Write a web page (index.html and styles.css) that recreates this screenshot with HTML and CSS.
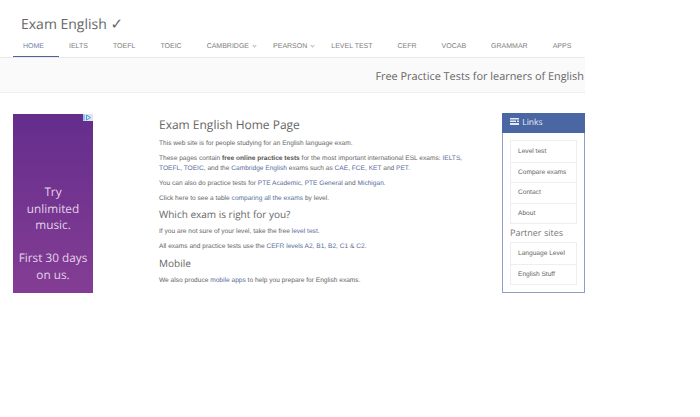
FILE: index.html
```html
<!DOCTYPE html>
<html lang="en">
<head>
    <meta charset="UTF-8">
    <meta name="viewport" content="width=device-width, initial-scale=1.0">
    <title>Exam English</title>
    <link rel="stylesheet" href="styles.css">
</head>
<body>

<div class="page">
    <header class="site-header">
        <div class="logo">Exam English <span class="tick">✓</span></div>
        <nav class="main-nav">
            <a href="#" class="active">HOME</a>
            <a href="#">IELTS</a>
            <a href="#">TOEFL</a>
            <a href="#">TOEIC</a>
            <a href="#">CAMBRIDGE<span class="caret"></span></a>
            <a href="#">PEARSON<span class="caret"></span></a>
            <a href="#">LEVEL TEST</a>
            <a href="#">CEFR</a>
            <a href="#">VOCAB</a>
            <a href="#">GRAMMAR</a>
            <a href="#">APPS</a>
        </nav>
    </header>

    <div class="hero">Free Practice Tests for learners of English</div>

    <div class="main">
        <!-- advert -->
        <aside class="ad">
            <span class="ad-badge">
                <svg width="9" height="7" viewBox="0 0 9 7"><path d="M1 0.5V6.5M3.5 1L7.5 3.5L3.5 6Z" fill="none" stroke="#35a7d8" stroke-width="1"/></svg>
            </span>
            <p>Try<br>unlimited<br>music.</p>
            <p>First 30 days<br>on us.</p>
        </aside>

        <section class="content">
            <h1>Exam English Home Page</h1>
            <p>This web site is for people studying for an English language exam.</p>
            <p>These pages contain <b>free online practice tests</b> for the most important international ESL exams: <a href="#">IELTS</a>, <a href="#">TOEFL</a>, <a href="#">TOEIC</a>, and the <a href="#">Cambridge English</a> exams such as <a href="#">CAE</a>, <a href="#">FCE</a>, <a href="#">KET</a> and <a href="#">PET</a>.</p>
            <p>You can also do practice tests for <a href="#">PTE Academic</a>, <a href="#">PTE General</a> and <a href="#">Michigan</a>.</p>
            <p>Click here to see a table <a href="#">comparing all the exams</a> by level.</p>
            <h2>Which exam is right for you?</h2>
            <p>If you are not sure of your level, take the free <a href="#">level test</a>.</p>
            <p>All exams and practice tests use the <a href="#">CEFR levels</a> <a href="#">A2</a>, <a href="#">B1</a>, <a href="#">B2</a>, <a href="#">C1</a> &amp; <a href="#">C2</a>.</p>
            <h2>Mobile</h2>
            <p>We also produce <a href="#">mobile apps</a> to help you prepare for English exams.</p>
        </section>

        <aside class="sidebar">
            <div class="sidebar-title">
                <svg width="9" height="7" viewBox="0 0 9 7"><path d="M0 0H9V1.5H0ZM0 2.5H6V4H0ZM7 2.5H9V4H7ZM0 5H9V7H0Z" fill="#e6eaf4"/></svg>
                Links
            </div>
            <div class="sidebar-body">
                <ul class="link-list">
                    <li>Level test</li>
                    <li>Compare exams</li>
                    <li>Contact</li>
                    <li>About</li>
                </ul>
                <h3>Partner sites</h3>
                <ul class="link-list">
                    <li>Language Level</li>
                    <li>English Stuff</li>
                </ul>
            </div>
        </aside>
    </div>
</div>

</body>
</html>
```

FILE: styles.css
```css
body {
    margin: 0;
    background-color: #fff;
    color: #666;
    font-family: "Liberation Sans", Arial, sans-serif;
    font-size: 6.6px;
    text-rendering: geometricPrecision;
}

a {
    color: #5a6d9e;
    text-decoration: none;
}

.page {
    width: 585px;
}

/* header */
.site-header {
    height: 58px;
    box-sizing: border-box;
    border-bottom: 1px solid #e9e9e9;
}

.logo {
    height: 37px;
    padding: 14px 0 0 21px;
    box-sizing: border-box;
    font-family: "Open Sans", sans-serif;
    font-size: 14px;
    line-height: 21px;
    color: #666;
}

.tick {
    font-family: "DejaVu Sans", sans-serif;
    font-size: 15px;
}

.main-nav {
    display: flex;
    padding-left: 13px;
}

.main-nav a {
    display: block;
    height: 20px;
    padding: 0 15px 0 10px;
    box-sizing: border-box;
    font-size: 7px;
    line-height: 20px;
    color: #808080;
    white-space: nowrap;
}

.main-nav a.active {
    color: #7682aa;
    border-bottom: 1px solid #4a64a0;
}

.caret {
    display: inline-block;
    width: 2px;
    height: 2px;
    margin: 0 -8px 1px 4px;
    border-right: 1px solid #bbb;
    border-bottom: 1px solid #bbb;
    transform: rotate(45deg);
}

/* strapline */
.hero {
    height: 35px;
    box-sizing: border-box;
    background-color: #fafafa;
    border-bottom: 1px solid #eee;
    padding-right: 1px;
    text-align: right;
    font-family: "Open Sans", sans-serif;
    font-size: 10.9px;
    line-height: 37px;
    color: #666;
}

/* columns */
.main {
    display: flex;
    align-items: flex-start;
    padding: 20px 0 0 13px;
}

.ad {
    position: relative;
    width: 80px;
    height: 179px;
    margin-top: 1px;
    padding-top: 70px;
    box-sizing: border-box;
    background: linear-gradient(#642d8c, #843d94);
    color: #e3d3ea;
    font-family: "Open Sans", sans-serif;
    font-size: 11.8px;
    line-height: 16.5px;
    text-align: center;
}

.ad p {
    margin: 0 0 16.5px;
}

.ad-badge {
    position: absolute;
    top: 0;
    right: 0;
    width: 10px;
    height: 7px;
    display: flex;
    background-color: #e4e4ee;
}

.content {
    width: 323px;
    margin-left: 66px;
    padding-top: 4px;
    line-height: 10px;
}

.content h1,
.content h2 {
    margin: 0;
    font-family: "Open Sans", sans-serif;
    font-weight: 400;
    color: #666;
}

.content h1 {
    font-size: 12px;
    line-height: 16px;
    margin-bottom: 5.5px;
}

.content h2 {
    font-size: 10px;
    line-height: 14px;
    margin-top: -1.5px;
    margin-bottom: 6px;
}

.content p {
    margin: 0 0 5px;
}

.content b {
    color: #555;
}

.sidebar {
    width: 83px;
    height: 180px;
    margin-left: 20px;
    box-sizing: border-box;
    border: 1px solid #8f9fc8;
    border-top: none;
}

.sidebar-title {
    height: 20px;
    margin: 0 -1px;
    padding-left: 8px;
    box-sizing: border-box;
    background-color: #4a66a3;
    color: #eef1f8;
    font-family: "Open Sans", sans-serif;
    font-size: 8.5px;
    line-height: 20px;
}

.sidebar-title svg {
    margin-right: 1px;
}

.sidebar-body {
    padding: 7px 7px 0;
}

.sidebar-body h3 {
    margin: 0;
    font-family: "Open Sans", sans-serif;
    font-size: 9px;
    font-weight: 400;
    line-height: 18px;
    color: #777;
}

.link-list {
    margin: 0;
    padding: 0;
    list-style: none;
    border: 1px solid #eee;
}

.link-list li {
    height: 20.5px;
    padding-left: 7px;
    box-sizing: border-box;
    border-top: 1px solid #eee;
    line-height: 20px;
    font-size: 6.6px;
    color: #666;
}

.link-list li:first-child {
    border-top: none;
    line-height: 21px;
}
```
